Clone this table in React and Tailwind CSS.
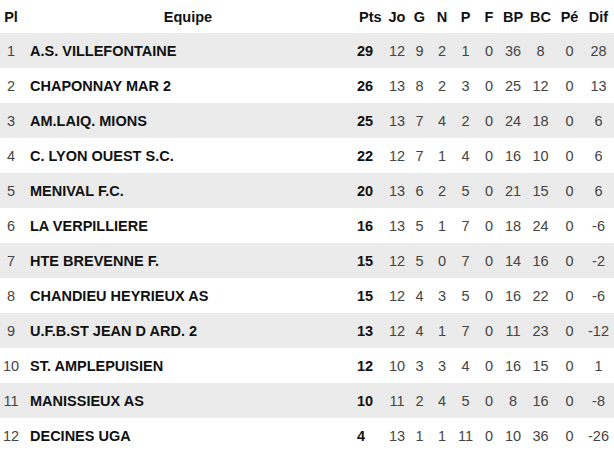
const rows = [
  [1, "A.S. VILLEFONTAINE", 29, 12, 9, 2, 1, 0, 36, 8, 0, 28],
  [2, "CHAPONNAY MAR 2", 26, 13, 8, 2, 3, 0, 25, 12, 0, 13],
  [3, "AM.LAIQ. MIONS", 25, 13, 7, 4, 2, 0, 24, 18, 0, 6],
  [4, "C. LYON OUEST S.C.", 22, 12, 7, 1, 4, 0, 16, 10, 0, 6],
  [5, "MENIVAL F.C.", 20, 13, 6, 2, 5, 0, 21, 15, 0, 6],
  [6, "LA VERPILLIERE", 16, 13, 5, 1, 7, 0, 18, 24, 0, -6],
  [7, "HTE BREVENNE F.", 15, 12, 5, 0, 7, 0, 14, 16, 0, -2],
  [8, "CHANDIEU HEYRIEUX AS", 15, 12, 4, 3, 5, 0, 16, 22, 0, -6],
  [9, "U.F.B.ST JEAN D ARD. 2", 13, 12, 4, 1, 7, 0, 11, 23, 0, -12],
  [10, "ST. AMPLEPUISIEN", 12, 10, 3, 3, 4, 0, 16, 15, 0, 1],
  [11, "MANISSIEUX AS", 10, 11, 2, 4, 5, 0, 8, 16, 0, -8],
  [12, "DECINES UGA", 4, 13, 1, 1, 11, 0, 10, 36, 0, -26],
];

const headers = ["Jo", "G", "N", "P", "F", "BP", "BC", "Pé", "Dif"];
const grid =
  "grid grid-cols-[22px_332px_31px_24px_21px_24px_23px_24px_24px_31px_27px_31px] items-center";

export default function App() {
  return (
    <div
      className="w-[614px] h-[450px] overflow-hidden bg-white text-[14.5px] leading-none"
      style={{ fontFamily: '"Liberation Sans", Arial, sans-serif' }}
    >
      <div className={`${grid} h-[33px] pt-px font-bold text-[#111]`}>
        <div className="text-center">Pl</div>
        <div className="text-center">Equipe</div>
        <div className="pl-[5px]">Pts</div>
        {headers.map((h) => (
          <div key={h} className="text-center">
            {h}
          </div>
        ))}
      </div>
      {rows.map((r, i) => (
        <div
          key={r[0]}
          className={`${grid} h-[35px] pt-px text-[#444] ${i % 2 === 0 ? "bg-[#ebebeb]" : "bg-white"}`}
        >
          <div className="text-center">{r[0]}</div>
          <div className="pl-[8px] font-bold text-[#111] whitespace-nowrap">{r[1]}</div>
          <div className="pl-[3px] font-bold text-[#111]">{r[2]}</div>
          {r.slice(3).map((v, j) => (
            <div key={j} className="text-center">
              {v}
            </div>
          ))}
        </div>
      ))}
    </div>
  );
}
